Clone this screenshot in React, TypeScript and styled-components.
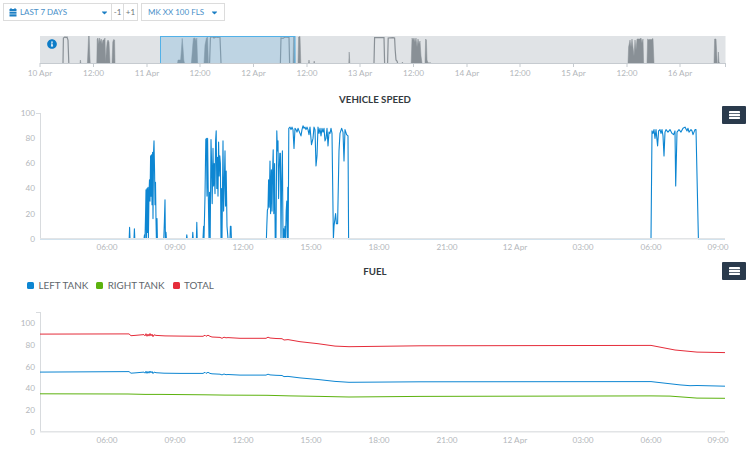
import React from "react";
import styled, { createGlobalStyle } from "styled-components";
import { FaCaretDown, FaInfoCircle } from "react-icons/fa";

const GlobalStyle = createGlobalStyle`
  html, body {
    margin: 0;
    padding: 0;
    background: #ffffff;
    font-family: Lato, "Open Sans", sans-serif;
  }
`;

const Page = styled.div`
  width: 750px;
  height: 459px;
  overflow: hidden;
`;

const Toolbar = styled.div`
  display: flex;
  height: 18px;
  padding: 3px 0 0 3px;
`;

const ToolButton = styled.div<{ $width: number; $gap?: number; $right: number; $left: number }>`
  display: flex;
  align-items: center;
  justify-content: space-between;
  box-sizing: border-box;
  width: ${(p) => p.$width}px;
  margin-left: ${(p) => p.$gap ?? 0}px;
  border: 1px solid #dcdcdc;
  background: #ffffff;
  padding: 0 ${(p) => p.$right}px 0 ${(p) => p.$left}px;
  color: #4a90c8;
  font-size: 8px;
  white-space: nowrap;
`;

const StepButton = styled.div<{ $width: number }>`
  display: flex;
  align-items: center;
  justify-content: center;
  box-sizing: border-box;
  width: ${(p) => p.$width}px;
  border: 1px solid #dcdcdc;
  border-left: 0;
  color: #6d7478;
  font-size: 8px;
`;

const ButtonLabel = styled.span`
  display: flex;
  align-items: center;
  gap: 3px;
`;

const NavigatorWrap = styled.div`
  position: relative;
  height: 46px;
  margin-top: 15px;
`;

const InfoBadge = styled.span`
  position: absolute;
  left: 47px;
  top: 3px;
  display: flex;
  color: #0d7cc7;
  font-size: 10px;
  background: radial-gradient(circle, #ffffff 55%, transparent 60%);
`;

const ChartBlock = styled.section<{ $top: number }>`
  position: relative;
  margin-top: ${(p) => p.$top}px;
`;

const ChartTitle = styled.h2`
  margin: 0;
  height: 13px;
  line-height: 13px;
  text-align: center;
  color: #333a40;
  font-size: 9.7px;
  font-weight: 700;
`;

const MenuButton = styled.div<{ $top: number }>`
  position: absolute;
  top: ${(p) => p.$top}px;
  right: 4px;
  display: flex;
  align-items: center;
  justify-content: center;
  width: 24px;
  height: 18px;
  border-radius: 1px;
  background: #2a3a4c;
`;

const Legend = styled.div`
  display: flex;
  align-items: center;
  height: 12px;
  margin-top: 1px;
  padding-left: 27px;
  gap: 8px;
`;

const LegendItem = styled.div`
  display: flex;
  align-items: center;
  gap: 4.5px;
  color: #5e666c;
  font-size: 9.8px;
`;

const Swatch = styled.span<{ $color: string }>`
  width: 7px;
  height: 7px;
  border-radius: 1.5px;
  background: ${(p) => p.$color};
`;

const Plot = styled.svg<{ $gap?: number }>`
  display: block;
  width: 750px;
  margin-top: ${(p) => p.$gap ?? 0}px;
`;

const AxisText = styled.text`
  fill: #b3b7bb;
  font-size: 8.2px;
  font-family: Lato, "Open Sans", sans-serif;
`;

const BLUE = "#0d86d2";
const GREEN = "#5cb20e";
const RED = "#e52c3a";
const NAV_GREY = "#899096";

const navTicks: [number, string][] = [
  [40, "10 Apr"],
  [93.5, "12:00"],
  [147, "11 Apr"],
  [200, "12:00"],
  [253.5, "12 Apr"],
  [307, "12:00"],
  [360, "13 Apr"],
  [413.5, "12:00"],
  [467, "14 Apr"],
  [520, "12:00"],
  [573.5, "15 Apr"],
  [627, "12:00"],
  [680, "16 Apr"]
];

const timeTicks: [number, string][] = [
  [107, "06:00"],
  [175, "09:00"],
  [243, "12:00"],
  [311, "15:00"],
  [379, "18:00"],
  [447, "21:00"],
  [515, "12 Apr"],
  [583, "03:00"],
  [651, "06:00"],
  [718, "09:00"]
];

// [x pixel, km/h]
const speed: [number, number][] = [
  [40, 0], [129.2, 0], [129.6, 9], [130, 0], [134, 0], [134.4, 8], [134.8, 0],
  [144, 0], [144.5, 3], [145, 0], [145.6, 20], [146, 39], [146.4, 0], [147, 40], [147.4, 5], [148, 41],
  [148.4, 0], [149, 36], [149.5, 47], [150, 30], [150.6, 66], [151, 34], [151.5, 67], [152, 27], [152.6, 69],
  [153, 16], [153.6, 70], [154, 78], [154.6, 52], [155, 27], [155.5, 45], [156, 15], [156.4, 0], [157, 16], [157.4, 0],
  [163.8, 0], [164.4, 14], [165, 31], [165.4, 0], [166, 5], [166.4, 0],
  [186.4, 0], [186.8, 3], [187.2, 0], [192.4, 0], [192.8, 5], [193.2, 0], [196.4, 0], [196.8, 13], [197.2, 0],
  [203, 0], [203.6, 10], [204, 0], [205, 34], [205.8, 79], [206.4, 80], [207, 34], [207.6, 80], [208.2, 40],
  [209, 0], [209.6, 37], [210.2, 0], [211, 79], [211.6, 60], [212.2, 28], [213, 72], [213.6, 42], [214.2, 60],
  [215, 36], [215.6, 78], [216.2, 86], [216.8, 40], [217.4, 65], [218, 34], [218.6, 77], [219.2, 50], [219.8, 66],
  [220.4, 60], [221, 0], [221.4, 40], [222, 0], [223, 78], [223.6, 22], [224.2, 40], [225, 70], [225.6, 26], [226.2, 54],
  [227, 10], [228, 0], [230, 0], [230.4, 10], [231, 10], [231.4, 0],
  [266.4, 0], [266.8, 10], [267.4, 23], [268, 24], [268.6, 47], [269.2, 25], [270, 62], [270.6, 20], [271.4, 55],
  [272, 22], [272.6, 54], [273.2, 71], [273.8, 20], [274.6, 60], [275.2, 0], [276, 0], [276.8, 86], [277.4, 70],
  [278, 78], [278.6, 32], [279.2, 55], [279.8, 68], [280.4, 68], [281, 0], [281.6, 42], [282.4, 70], [283, 0], [283.6, 8],
  [284.2, 0], [285, 10], [285.6, 0], [286.2, 22], [286.8, 30], [287.4, 0], [287.8, 41], [288.2, 0], [288.8, 88],
  [290, 89], [291, 87], [292, 89], [293, 87], [294, 72], [295, 88], [296, 87], [297, 85], [298, 88], [299, 86], [300, 84],
  [301, 82], [302, 87], [303, 90], [304, 88], [305, 89], [306, 87], [307, 89], [308, 87], [309, 83], [310, 89],
  [311.5, 75], [313, 80], [314, 89], [315, 87], [316, 58], [317, 66], [318, 89], [319, 84], [320, 88], [321, 82], [322, 88],
  [323, 85], [324, 88], [325, 78], [326, 80], [327, 88], [328, 74], [329, 85], [330, 84], [331, 88], [332, 84],
  [333.4, 0], [334, 10], [335.6, 20], [336.4, 12], [337.6, 12], [339, 70], [340, 84], [341.6, 88], [343, 85],
  [344, 62], [345, 87], [346.6, 83], [348, 82], [348.6, 0],
  [651, 0], [652, 86], [653, 84], [654, 87], [655, 80], [656, 87], [657.6, 74], [658.6, 86], [660, 87], [661, 84],
  [662, 87], [663, 82], [664, 66], [665, 85], [666, 87], [668, 85], [670, 87], [672, 84], [673.6, 83], [675, 86],
  [675.7, 42], [677, 85], [679, 87], [681, 85], [683, 88], [685, 89], [687, 86], [688, 88], [689, 85], [691, 87],
  [692, 86], [693, 83], [695, 87], [696, 87], [698.4, 0], [725, 0]
];

const leftTank: [number, number][] = [
  [40, 55], [129, 55.4], [131, 54], [135, 54.2], [144, 55], [145, 54], [146, 55.8], [147, 53.8], [148, 55.6], [149, 54], [150, 56],
  [151, 54.2], [152, 55.6], [153, 53.6], [154, 55], [156, 54.4], [164, 54], [180, 53.8], [203, 53.8], [205, 54.8], [206, 53.8],
  [208, 54.8], [210, 53.8], [212, 53.4], [220, 53], [222, 52.4], [224, 53.2], [226, 52.6], [228, 52.8], [240, 52.2], [266, 52.2],
  [268, 53], [270, 52.4], [276, 52], [282, 51.8], [284, 50.8], [288, 51], [300, 49.6], [318, 48.2], [335, 46.4], [349, 45.6],
  [420, 46], [651, 46.2], [680, 43.2], [690, 42.4], [697, 42.6], [725, 42]
];

const rightTank: [number, number][] = [
  [40, 35], [128, 34.8], [145, 34.4], [160, 34.4], [205, 34], [225, 33.8], [267, 33.6], [290, 33], [320, 32.6], [349, 32],
  [420, 32.6], [651, 33], [670, 32.8], [697, 31], [725, 30.8]
];

const total: [number, number][] = [
  [40, 90], [129, 90.2], [131, 88.6], [135, 88.8], [144, 89.6], [145, 88.4], [146, 90.4], [147, 88], [148, 90], [149, 88.2], [150, 90.6],
  [151, 88.4], [152, 90], [153, 87.6], [154, 89.4], [156, 88.8], [165, 88.4], [180, 88.2], [203, 88], [205, 89], [206, 88],
  [208, 89], [210, 88], [212, 87.4], [220, 87], [222, 86.2], [224, 87.2], [226, 86.6], [228, 86.8], [240, 86.2], [266, 86.2],
  [268, 87.2], [270, 86.4], [276, 86], [282, 85.8], [284, 84.6], [288, 85], [300, 83], [318, 81.2], [335, 79], [349, 78.4],
  [420, 79.2], [651, 79.6], [675, 75.4], [697, 73.4], [725, 73]
];

// solid parts of the overview series: x pixel, y pixel
const navShapes: string[] = [
  "80,63 80.4,60 80.8,63",
  "87.4,63 88,50 88.6,36 89.2,36 89.8,55 90.2,63",
  "96.8,63 97.2,39 98,38 98.8,44 99.6,38 100.4,42 101.2,39 102,44 103,40 104,40 105,38 105.6,62 106.4,50 107.2,42 108,40 109,42 110,63",
  "112,63 112.8,42 113.6,39.6 114.6,40 115,63",
  "177.6,63 178,60 180.8,60 181.2,63",
  "180.4,63 181.4,50 182.2,38.4 183,48 183.8,60 184.4,63",
  "191.4,63 192.8,45 193.4,38.4 195,38 196,41 196.8,38 197.6,63",
  "204,63 205,45 206.4,38 207.6,37 208.4,63",
  "293,63 293.6,36.6 294.4,37 295,63",
  "298,63 298.6,37 300,36.4 300.8,63",
  "308.6,63 309,60 309.4,63",
  "313.8,63 314.2,61 314.6,63",
  "348.8,63 349.2,52 349.8,63",
  "402,63 402.4,62 402.8,63",
  "411.2,63 412,38 413,40 414,38 415,42 416,38 417,47 418,39 419,44 420,41 421,56 422,63",
  "425,63 425.6,39 426.4,40 427,60 428,63 431,63",
  "628,63 628.6,47 630,40 631,47 632,39 634,56 635,40 636,50 637,39 640,39 641,38 642,43 643,39 643.6,63",
  "647,63 647.6,39 649,40 650,39 651,40 652,39 653,38.6 654,63",
  "714,63 714.6,39 716,39 716.6,50 717.2,63",
  "718,63 718.4,52 719,63 720,63"
];

const navArches: string[] = [
  "63,63 63.4,38 65,37 66,37.5 67,37 68,40 68.8,63",
  "209.6,63 210.4,38 211,37 213,37 214,38 216,37 218,37.4 219,37 220,37.4 221,63",
  "280.4,63 281,38 283,38.4 285,37 287,37.2 289,37.4 289.6,63",
  "374,63 374.6,37.6 384,37.6 384.6,63",
  "387.6,63 388.2,38 393,37.6 394.6,38 395.2,50 396,60 397,61 397.6,63"
];

const speedPath = speed.map(([x, v]) => `${x},${(238.7 - v * 1.254).toFixed(1)}`).join(" ");
const fuelLine = (pts: [number, number][]) =>
  pts.map(([x, v]) => `${x},${(431.7 - v * 1.084).toFixed(1)}`).join(" ");

const CalendarIcon = () => (
  <svg width="8" height="9" viewBox="0 0 8 9">
    <rect x="1.5" y="0" width="1" height="1.5" fill="#1c7fc4" />
    <rect x="5.5" y="0" width="1" height="1.5" fill="#1c7fc4" />
    <rect x="0.5" y="1" width="7" height="2.2" fill="#1c7fc4" />
    <rect x="0.5" y="3.8" width="7" height="1.9" fill="#1c7fc4" />
    <rect x="0.5" y="6.3" width="7" height="2.2" fill="#1c7fc4" />
  </svg>
);

const BarsIcon = () => (
  <svg width="11" height="8" viewBox="0 0 11 8">
    <rect y="0" width="11" height="2.2" rx="0.4" fill="#ffffff" />
    <rect y="2.9" width="11" height="2.2" rx="0.4" fill="#ffffff" />
    <rect y="5.8" width="11" height="2.2" rx="0.4" fill="#ffffff" />
  </svg>
);

const Navigator = () => (
  <NavigatorWrap>
    <Plot viewBox="0 36 750 46" height="46">
      <rect x="40" y="36" width="685.5" height="27" fill="#e0e3e6" />
      {navShapes.map((pts, i) => (
        <polygon key={i} points={pts} fill={NAV_GREY} stroke={NAV_GREY} strokeWidth="0.5" />
      ))}
      {navArches.map((pts, i) => (
        <polyline key={i} points={pts} fill="none" stroke={NAV_GREY} strokeWidth="1.2" />
      ))}
      <rect x="160.5" y="36.5" width="134.5" height="27" fill="#6fb2de" fillOpacity="0.3" stroke="#52b1e8" />
      <line x1="40" x2="725.5" y1="63.5" y2="63.5" stroke="#c6cbd0" />
      {navTicks.map(([x]) => (
        <line key={x} x1={x} x2={x} y1="63" y2="67" stroke="#c6cbd0" />
      ))}
      <line x1="725.5" x2="725.5" y1="63" y2="67" stroke="#c6cbd0" />
      {navTicks.map(([x, label]) => (
        <AxisText key={x} x={x} y="76" textAnchor="middle">
          {label}
        </AxisText>
      ))}
    </Plot>
    <InfoBadge>
      <FaInfoCircle />
    </InfoBadge>
  </NavigatorWrap>
);

const SpeedChart = () => (
  <ChartBlock $top={11}>
    <ChartTitle>VEHICLE SPEED</ChartTitle>
    <MenuButton $top={13}>
      <BarsIcon />
    </MenuButton>
    <Plot viewBox="0 106 750 150" height="150">
      <line x1="40.5" x2="40.5" y1="113" y2="239" stroke="#d8dbde" />
      <line x1="36" x2="40" y1="113.5" y2="113.5" stroke="#d8dbde" />
      {[0, 20, 40, 60, 80, 100].map((v) => (
        <AxisText key={v} x="35" y={241.6 - v * 1.254} textAnchor="end">
          {v}
        </AxisText>
      ))}
      {timeTicks.map(([x, label]) => (
        <AxisText key={x} x={x} y="250" textAnchor="middle">
          {label}
        </AxisText>
      ))}
      <polyline points={speedPath} fill="none" stroke={BLUE} strokeWidth="1.1" strokeLinejoin="round" />
      <line x1="40" x2="725" y1="238.8" y2="238.8" stroke="#e2e4e6" strokeWidth="1.6" />
    </Plot>
  </ChartBlock>
);

const FuelChart = () => (
  <ChartBlock $top={9}>
    <ChartTitle>FUEL</ChartTitle>
    <MenuButton $top={-3}>
      <BarsIcon />
    </MenuButton>
    <Legend>
      <LegendItem>
        <Swatch $color={BLUE} />
        LEFT TANK
      </LegendItem>
      <LegendItem>
        <Swatch $color={GREEN} />
        RIGHT TANK
      </LegendItem>
      <LegendItem>
        <Swatch $color={RED} />
        TOTAL
      </LegendItem>
    </Legend>
    <Plot viewBox="0 300 750 150" height="150" $gap={9}>
      <line x1="40.5" x2="40.5" y1="312" y2="432" stroke="#d8dbde" />
      <line x1="36" x2="40" y1="312.5" y2="312.5" stroke="#d8dbde" />
      <line x1="40" x2="725" y1="431.8" y2="431.8" stroke="#e2e4e6" strokeWidth="1.4" />
      {[0, 20, 40, 60, 80, 100].map((v) => (
        <AxisText key={v} x="35" y={434.6 - v * 1.084} textAnchor="end">
          {v}
        </AxisText>
      ))}
      {timeTicks.map(([x, label]) => (
        <AxisText key={x} x={x} y="443" textAnchor="middle">
          {label}
        </AxisText>
      ))}
      <polyline points={fuelLine(total)} fill="none" stroke={RED} strokeWidth="1" />
      <polyline points={fuelLine(leftTank)} fill="none" stroke={BLUE} strokeWidth="1" />
      <polyline points={fuelLine(rightTank)} fill="none" stroke={GREEN} strokeWidth="1" />
    </Plot>
  </ChartBlock>
);

export default function App() {
  return (
    <Page>
      <GlobalStyle />
      <Toolbar>
        <ToolButton $width={109} $left={5} $right={2}>
          <ButtonLabel>
            <CalendarIcon />
            LAST 7 DAYS
          </ButtonLabel>
          <FaCaretDown size={9} color="#1c7fc4" />
        </ToolButton>
        <StepButton $width={12}>-1</StepButton>
        <StepButton $width={14}>+1</StepButton>
        <ToolButton $width={84} $gap={3} $left={6} $right={5}>
          <ButtonLabel>MK XX 100 FLS</ButtonLabel>
          <FaCaretDown size={9} color="#1c7fc4" />
        </ToolButton>
      </Toolbar>
      <Navigator />
      <SpeedChart />
      <FuelChart />
    </Page>
  );
}
